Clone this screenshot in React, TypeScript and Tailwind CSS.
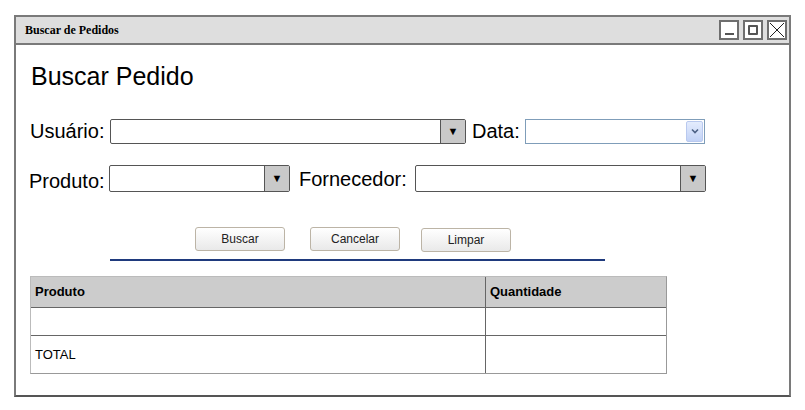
import React from "react";

const ARROW = "▼";

const Select = ({ w, h }: { w: string; h: string }) => (
  <div className={`${w} ${h} flex border border-[#555] bg-white rounded-[2px]`}>
    <div className="flex-1" />
    <div className="w-[25px] flex items-center justify-center bg-[#c9c9c9] border-l border-[#555] text-[11px] text-black">
      {ARROW}
    </div>
  </div>
);

const Btn = ({ label }: { label: string }) => (
  <button className="w-[90px] h-[24px] rounded-[3px] border border-[#bcb4a6] bg-gradient-to-b from-[#ffffff] to-[#e9e9e9] text-[12px] text-[#222] font-['Liberation_Sans',sans-serif]">
    {label}
  </button>
);

export default function App() {
  return (
    <div className="w-[805px] h-[410px] bg-white pt-[15px] pl-[14px] font-['Liberation_Sans',Arial,sans-serif] text-black">
      {/* Window */}
      <div className="w-[777px] h-[382px] border-2 border-[#7a7a7a] border-b-[#555] flex flex-col">
        {/* Title bar */}
        <div className="h-[28px] bg-[#dedede] border-b-2 border-[#7a7a7a] flex items-center justify-between pl-[9px] pr-[2px]">
          <span className="text-[12px] font-bold font-['Liberation_Serif',serif]">Buscar de Pedidos</span>
          <div className="flex gap-[4px]">
            <div className="w-[20px] h-[20px] border-2 border-[#6e6e6e] bg-white flex items-end justify-center pb-[3px]">
              <div className="w-[9px] h-[2px] bg-[#555]" />
            </div>
            <div className="w-[20px] h-[20px] border-2 border-[#6e6e6e] bg-white flex items-center justify-center">
              <div className="w-[10px] h-[10px] border-2 border-[#555] rounded-[1px]" />
            </div>
            <div className="w-[20px] h-[20px] border-2 border-[#6e6e6e] bg-white flex items-center justify-center">
              <svg width="16" height="16" viewBox="0 0 16 16">
                <path d="M1 1 L15 15 M15 1 L1 15" stroke="#222" strokeWidth="1" />
              </svg>
            </div>
          </div>
        </div>

        {/* Body */}
        <div className="flex flex-col pl-[14px]">
          <h1 className="mt-[16px] text-[25px] leading-[30px] pl-[1px]">Buscar Pedido</h1>

          {/* Row 1 */}
          <div className="mt-[28px] flex items-center h-[24px]">
            <span className="w-[80px] text-[20px] leading-[24px]">Usuário:</span>
            <Select w="w-[356px]" h="h-[25px]" />
            <span className="ml-[6px] w-[53px] text-[20px] leading-[24px]">Data:</span>
            <div className="w-[180px] h-[25px] border border-[#7f9db9] bg-white flex items-center justify-end pr-[1px]">
              <div className="w-[17px] h-[21px] rounded-[2px] border border-[#b9c9ef] bg-gradient-to-b from-[#e4ecfd] to-[#c2d2f6] flex items-center justify-center">
                <svg width="8" height="6" viewBox="0 0 8 6">
                  <path d="M1 1.5 L4 4.5 L7 1.5" stroke="#4d6185" strokeWidth="1.6" fill="none" />
                </svg>
              </div>
            </div>
          </div>

          {/* Row 2 */}
          <div className="mt-[22px] flex items-center h-[27px]">
            <span className="w-[80px] text-[20px] leading-[24px] -ml-[1px] mt-[4px]">Produto:</span>
            <Select w="w-[181px]" h="h-[27px]" />
            <span className="ml-[9px] w-[116px] text-[20px] leading-[24px]">Fornecedor:</span>
            <Select w="w-[291px]" h="h-[27px]" />
          </div>

          {/* Buttons */}
          <div className="mt-[35px] flex pl-[165px] gap-[25px]">
            <Btn label="Buscar" />
            <Btn label="Cancelar" />
            <div className="-ml-[4px]">
              <Btn label="Limpar" />
            </div>
          </div>

          <div className="mt-[7px] ml-[80px] w-[495px] h-[2px] bg-[#1f3a7d]" />

          {/* Table */}
          <div className="mt-[15px] w-[637px] border border-[#bbb] border-b-[#999] border-r-[#999] font-['Liberation_Sans',sans-serif] text-[13px]">
            <div className="flex h-[31px] bg-[#cccccc] border-b border-[#666]">
              <div className="w-[455px] pl-[4px] flex items-center font-bold border-r border-[#666]">Produto</div>
              <div className="flex-1 pl-[4px] flex items-center font-bold">Quantidade</div>
            </div>
            <div className="flex h-[28px] border-b border-[#666]">
              <div className="w-[455px] border-r border-[#666]" />
              <div className="flex-1" />
            </div>
            <div className="flex h-[37px]">
              <div className="w-[455px] pl-[4px] flex items-center border-r border-[#666]">TOTAL</div>
              <div className="flex-1" />
            </div>
          </div>
        </div>
      </div>
    </div>
  );
}
